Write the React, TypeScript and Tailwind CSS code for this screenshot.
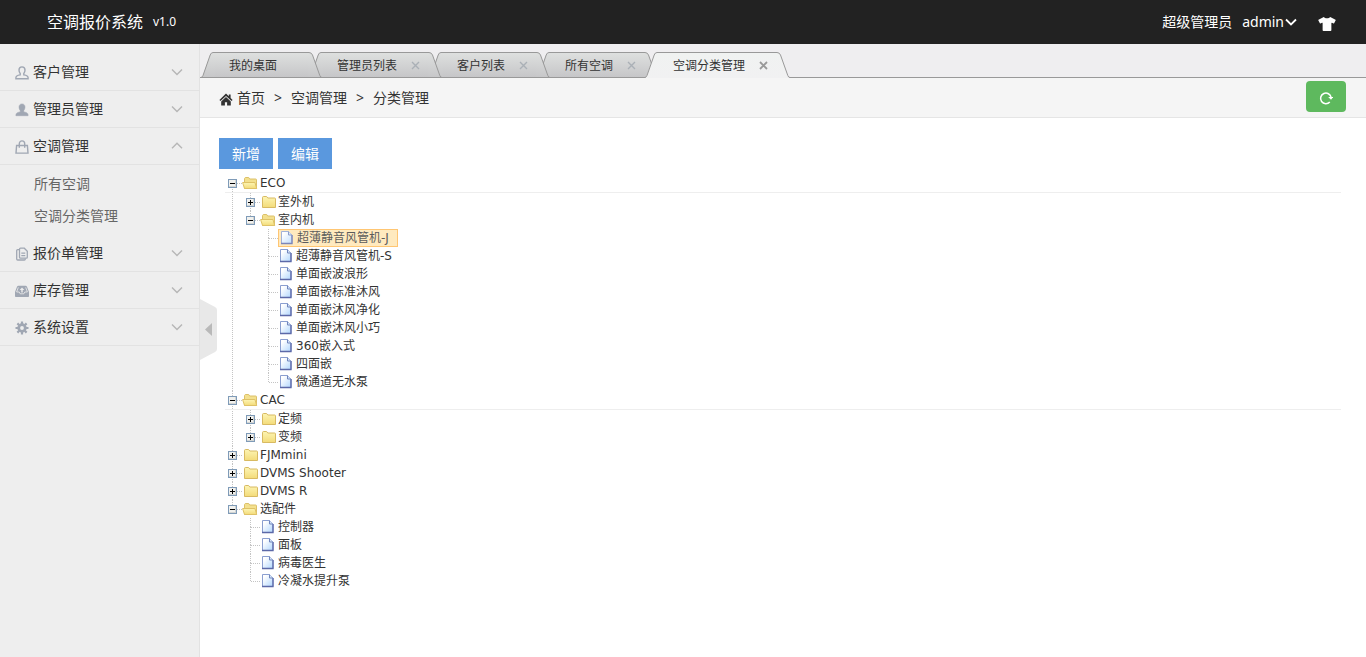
import { useState } from 'react';
import type { ReactNode } from 'react';
import clsx from 'clsx';
import { FaTshirt } from 'react-icons/fa';

type TreeItem = {
  name: string;
  open?: boolean;
  leaf?: boolean;
  children?: TreeItem[];
};

const leaf = (name: string): TreeItem => ({ name, leaf: true });

const treeData: TreeItem[] = [
  {
    name: 'ECO',
    open: true,
    children: [
      { name: '室外机' },
      {
        name: '室内机',
        open: true,
        children: [
          leaf('超薄静音风管机-J'),
          leaf('超薄静音风管机-S'),
          leaf('单面嵌波浪形'),
          leaf('单面嵌标准沐风'),
          leaf('单面嵌沐风净化'),
          leaf('单面嵌沐风小巧'),
          leaf('360嵌入式'),
          leaf('四面嵌'),
          leaf('微通道无水泵')
        ]
      }
    ]
  },
  { name: 'CAC', open: true, children: [{ name: '定频' }, { name: '变频' }] },
  { name: 'FJMmini' },
  { name: 'DVMS Shooter' },
  { name: 'DVMS R' },
  {
    name: '选配件',
    open: true,
    children: [leaf('控制器'), leaf('面板'), leaf('病毒医生'), leaf('冷凝水提升泵')]
  }
];

const tabs = ['我的桌面', '管理员列表', '客户列表', '所有空调', '空调分类管理'];

/* ---------- icons ---------- */

const userPath =
  'M7 .9c2 0 3 1.300 3 3.200 0 1.500-.5 2.600-1.200 3.300v1.500c2 .3 4.300 1 4.300 2.900v.9H.9v-.9c0-1.900 2.300-2.600 4.300-2.900V7.400C4.500 6.700 4 5.600 4 4.100 4 2.200 5 .9 7 .9z';

const UserOutlineIcon = () => (
  <svg viewBox="0 0 14 14" className="w-3.5 h-3.5" fill="none" stroke="currentColor" strokeWidth="1.400">
    <path d={userPath} />
  </svg>
);

const UserSolidIcon = () => (
  <svg viewBox="0 0 14 14" className="w-3.5 h-3.5" fill="currentColor" stroke="currentColor" strokeWidth=".5">
    <path d={userPath} />
  </svg>
);

const BagIcon = () => (
  <svg viewBox="0 0 14 14" className="w-3.5 h-3.5" fill="none" stroke="currentColor" strokeWidth="1.400">
    <path d="M1.600 5.500h10.800l.6 7.600H1z" />
    <path d="M4.300 7.800V3.800C4.300 2 5.500.9 7 .9s2.700 1.100 2.700 2.900v4" />
  </svg>
);

const DocsIcon = () => (
  <svg viewBox="0 0 14 14" className="w-3.5 h-3.5" fill="none" stroke="currentColor" strokeWidth="1.300">
    <path d="M5.500 1.200h3.800l3 3v6c0 .6-.4 1-1 1H5.500c-.6 0-1-.4-1-1v-8c0-.6.4-1 1-1z" />
    <path d="M4.300 2.600H2.700c-.6 0-1 .4-1 1v8.400c0 .6.4 1 1 1h6.600c.6 0 1-.4 1-1v-.6" />
    <path d="M6.300 6.200h4M6.300 8.600h4" />
  </svg>
);

const StockIcon = () => (
  <svg viewBox="0 0 14 14" className="w-3.5 h-3.5">
    <path d="M3.500 1.800h7c.8 0 1.200.4 1.500 1l2 5.200v4.200c0 .5-.3.8-.8.8H.8c-.5 0-.8-.3-.8-.8V8l2-5.200c.3-.6.7-1 1.500-1z" fill="currentColor" />
    <path d="M3.300 3.400L1.600 8h2.600l1 1.800h3.600l1-1.800h2.600l-1.700-4.600" fill="none" stroke="#eee" strokeWidth=".8" />
    <path d="M7 3.600l2.300 2.500H7.700v2.300H6.300V6.100H4.700z" fill="#eee" />
  </svg>
);

const GearIcon = () => (
  <svg viewBox="0 0 14 14" className="w-3.5 h-3.5" stroke="currentColor" fill="none">
    <circle cx="7" cy="7" r="3.300" strokeWidth="2.800" />
    <path
      d="M7 .5V3M7 11v2.500M.5 7H3M11 7h2.500M2.400 2.400l1.800 1.800M9.800 9.800l1.800 1.800M2.400 11.600l1.800-1.800M9.800 4.200l1.800-1.800"
      strokeWidth="2.200"
    />
  </svg>
);

const HomeIcon = () => (
  <svg viewBox="0 0 14 14" className="w-3.5 h-3.5" fill="#333">
    <path d="M7 .6L.4 6.900l1.100 1.200L7 2.900l5.500 5.200 1.100-1.200-2-1.900V1.600H9.800v1.700z" />
    <path d="M7 3.900L2.200 8.400V12.500h3.700V9.300h2.200v3.200h3.700V8.400z" />
  </svg>
);

const RefreshIcon = () => (
  <svg viewBox="0 0 14 14" className="w-3.5 h-3.5" fill="none" stroke="#fff" strokeWidth="1.500">
    <path d="M10.800 11A5.300 5.300 0 1 1 12.100 6.500" />
    <path d="M9.200 6h5L12 8.800z" fill="#fff" stroke="none" />
  </svg>
);

const Chevron = ({ up = false, bold = false }: { up?: boolean; bold?: boolean }) => (
  <svg viewBox="0 0 12 8" className="w-3 h-2" fill="none" stroke="currentColor" strokeWidth={bold ? 1.8 : 1.4}>
    <path d={up ? 'M1 6.200L6 1.300l5 4.900' : 'M1 1.500L6 6.400l5-4.900'} />
  </svg>
);

/* ---------- tree ---------- */

const FolderIcon = ({ open = false }: { open?: boolean }) => (
  <svg viewBox="0 0 16 16" className="w-4 h-4 shrink-0">
    <defs>
      <linearGradient id="folder" x1="0" y1="0" x2="0" y2="1">
        <stop offset="0" stopColor="#fdf5b4" />
        <stop offset="1" stopColor="#f3db79" />
      </linearGradient>
    </defs>
    {open ? (
      <>
        <path d="M2.500 13.500v-10l.8-1h3.400l1 1.500h6c.5 0 .8.3.8.8v8.700z" fill="#f3e08e" stroke="#dcc069" />
        <path d="M.6 7.500h12.300l1.800 6H2.500z" fill="url(#folder)" stroke="#dfc267" />
      </>
    ) : (
      <path
        d="M2.500 13.500V3.700c0-.7.3-1.200.9-1.200h3.200l1.200 1.500h6.900c.5 0 .8.3.8.8v8.700z"
        fill="url(#folder)"
        stroke="#d8ba62"
      />
    )}
  </svg>
);

const FileIcon = () => (
  <svg viewBox="0 0 16 16" className="w-4 h-4 shrink-0">
    <defs>
      <linearGradient id="file" x1="0" y1="0" x2="1" y2="1">
        <stop offset="0.200" stopColor="#fff" />
        <stop offset="1" stopColor="#b0d6fd" />
      </linearGradient>
    </defs>
    <path d="M2.500 1.500h7l3.500 3.500v8.500H2.500z" fill="url(#file)" stroke="#8b9fd0" />
    <path d="M13 5v8.500H2" fill="none" stroke="#5c69a8" strokeWidth="1.300" />
    <path d="M9.500 1.500V5H13" fill="#d5e3f8" stroke="#7186bd" />
  </svg>
);

type SwitchIconProps = { item: TreeItem; first: boolean; last: boolean; open: boolean };

const SwitchIcon = ({ item, first, last, open }: SwitchIconProps) => (
  <svg viewBox="0 0 18 18" className="w-[18px] h-[18px] block" shapeRendering="crispEdges">
    <g stroke="#c4c4c4" strokeDasharray="1 1">
      {!first && <path d="M8.500 0V9" />}
      {!last && <path d="M8.500 9V18" />}
      <path d="M9 9.500H18" />
    </g>
    {!item.leaf && (
      <>
        <rect x="4.500" y="5.500" width="8" height="8" fill="#f1f1ee" stroke="#7f9bb8" />
        <path d="M5 12.500h7M11.500 6v7" stroke="#d3d5d3" />
        <path d="M6 9.500h5" stroke="#000" />
        {!open && <path d="M8.500 7v5" stroke="#000" />}
      </>
    )}
  </svg>
);

type NodeProps = {
  item: TreeItem;
  level: number;
  first: boolean;
  last: boolean;
  selected: string;
  onSelect: (name: string) => void;
};

function TreeNode({ item, level, first, last, selected, onSelect }: NodeProps) {
  const [open, setOpen] = useState(!!item.open);
  const isSelected = selected === item.name;
  const underlined = level === 0 && open && !last;

  return (
    <li>
      <div className="flex h-[18px]">
        {item.leaf ? (
          <span className="w-[18px]">
            <SwitchIcon item={item} first={first} last={last} open={open} />
          </span>
        ) : (
          <button aria-label={`展开 ${item.name}`} aria-expanded={open} onClick={() => setOpen(!open)}>
            <SwitchIcon item={item} first={first} last={last} open={open} />
          </button>
        )}
        <a
          href="#"
          onClick={() => onSelect(item.name)}
          className={clsx(
            'flex items-center gap-0.5 h-[18px] text-xs leading-4 whitespace-nowrap',
            isSelected && 'bg-[#ffe6b0] border border-[#ffb951] pr-2 opacity-80'
          )}
        >
          {item.leaf ? <FileIcon /> : <FolderIcon open={open} />}
          <span>{item.name}</span>
        </a>
      </div>
      {item.children && open && (
        <ul
          className={clsx(
            underlined && 'relative before:absolute before:-left-2 before:right-0 before:top-0 before:h-px before:bg-[#eee] pt-px',
            last ? 'ml-[18px]' : 'ml-2 pl-[9px] border-l border-dotted border-[#c4c4c4]'
          )}
        >
          {item.children.map((child, i) => (
            <TreeNode
              key={child.name}
              item={child}
              level={level + 1}
              first={false}
              last={i === item.children!.length - 1}
              selected={selected}
              onSelect={onSelect}
            />
          ))}
        </ul>
      )}
    </li>
  );
}

/* ---------- sidebar ---------- */

type MenuProps = { icon: ReactNode; title: string; items?: string[] };

function MenuGroup({ icon, title, items }: MenuProps) {
  const [open, setOpen] = useState(!!items);
  return (
    <div>
      <button
        onClick={() => setOpen(!open)}
        aria-expanded={open}
        className="w-full h-[37px] flex items-center pl-[15px] pr-4 border-b border-[#e2e2e2] text-sm text-left"
      >
        <span className="text-[#a0a7b3] mr-1 pt-0.5">{icon}</span>
        <span className="flex-1">{title}</span>
        <span className="text-[#b6b6b6]">
          <Chevron up={open} />
        </span>
      </button>
      {items && open && (
        <ul className="py-[3px]">
          {items.map((item) => (
            <li key={item}>
              <a href="#" className="block pl-[34px] leading-8 text-sm text-[#666]">
                {item}
              </a>
            </li>
          ))}
        </ul>
      )}
    </div>
  );
}

/* ---------- tabs ---------- */

type TabProps = { title: string; active: boolean; closable: boolean; order: number; onClick: () => void };

function Tab({ title, active, closable, order, onClick }: TabProps) {
  const fill = active ? 'url(#tab-on)' : 'url(#tab-off)';
  return (
    <li className="relative flex h-[26px] -mr-[13px]" style={{ zIndex: active ? 20 : order }}>
      <svg viewBox="0 0 14 26" className="w-3.5 h-[26px]">
        <defs>
          <linearGradient id="tab-off" x1="0" y1="0" x2="0" y2="1">
            <stop offset="0" stopColor="#dee0df" />
            <stop offset="1" stopColor="#c6c6c8" />
          </linearGradient>
          <linearGradient id="tab-on" x1="0" y1="0" x2="0" y2="1">
            <stop offset="0" stopColor="#f0f2f1" />
            <stop offset="1" stopColor="#f1f1f2" />
          </linearGradient>
        </defs>
        <path d="M0 26L1.500 24.500 9 3Q10 .5 12 .5H14V26z" fill={fill} />
        <path d="M0 25.500Q1.500 25 2 23.500L9.200 3Q10 .5 12 .5H14" fill="none" stroke="#999" />
        {!active && <path d="M0 25.500H14" stroke="#999" />}
      </svg>
      <div
        className={clsx(
          'flex pl-3.5 border-t border-[#999]',
          active
            ? 'bg-linear-to-b from-[#f0f2f1] to-[#f1f1f2]'
            : 'bg-linear-to-b from-[#dee0df] to-[#c6c6c8] border-b'
        )}
      >
        <a href="#" onClick={onClick} className="pt-px text-xs leading-6 whitespace-nowrap">
          {title}
        </a>
        <div className="w-[31px] flex items-center pl-3.5">
          {closable && (
            <button aria-label={`关闭 ${title}`} className={active ? 'text-[#999]' : 'text-[#aab0b6]'}>
              <svg viewBox="0 0 9 9" className="w-[9px] h-[9px]" stroke="currentColor" strokeWidth={active ? 1.8 : 1.4}>
                <path d="M1 1l7 7M8 1L1 8" />
              </svg>
            </button>
          )}
        </div>
      </div>
      <svg viewBox="0 0 14 26" className="w-3.5 h-[26px]">
        <path d="M0 26V.5H1Q3.500.5 4.500 3L12 24.500 14 26z" fill={fill} />
        <path d="M0 .5H1Q3.500.5 4.500 3L11.800 23.500Q12.500 25.500 14 25.500" fill="none" stroke="#999" />
        {!active && <path d="M0 25.500H14" stroke="#999" />}
      </svg>
    </li>
  );
}

export default function App() {
  const [activeTab, setActiveTab] = useState(4);
  const [selected, setSelected] = useState('超薄静音风管机-J');
  const [sidebar, setSidebar] = useState(true);

  return (
    <div className="min-h-screen flex flex-col bg-white text-[#333] font-['Noto_Sans','Noto_Sans_CJK_SC',sans-serif]">
      <header className="h-11 bg-[#222] text-white flex items-center justify-between pl-[47px] pr-[30px]">
        <div className="flex items-center gap-2.5">
          <a href="#" className="text-base">空调报价系统</a>
          <span className="text-xs">v1.0</span>
        </div>
        <div className="flex items-center text-sm">
          <span className="mr-2.5">超级管理员</span>
          <button className="flex items-center gap-px">
            admin
            <Chevron bold />
          </button>
          <button aria-label="换肤" className="ml-[21px] pt-1">
            <FaTshirt className="w-[18px] h-3.5" />
          </button>
        </div>
      </header>

      <div className="flex flex-1">
        {sidebar && (
          <aside className="w-[200px] shrink-0 pt-2.5 bg-[#eee] border-r border-[#e2e2e2]">
            <MenuGroup icon={<UserOutlineIcon />} title="客户管理" />
            <MenuGroup icon={<UserSolidIcon />} title="管理员管理" />
            <MenuGroup icon={<BagIcon />} title="空调管理" items={['所有空调', '空调分类管理']} />
            <MenuGroup icon={<DocsIcon />} title="报价单管理" />
            <MenuGroup icon={<StockIcon />} title="库存管理" />
            <MenuGroup icon={<GearIcon />} title="系统设置" />
          </aside>
        )}

        <main className="relative flex-1 min-w-0">
          <div className="relative h-[34px] pt-2 pl-px bg-[#efeef0] shadow-[inset_0_-1px_#999]">
            <ul className="flex">
              {tabs.map((title, i) => (
                <Tab
                  key={title}
                  title={title}
                  active={i === activeTab}
                  closable={i > 0}
                  order={tabs.length - i}
                  onClick={() => setActiveTab(i)}
                />
              ))}
            </ul>
          </div>

          <nav className="h-10 flex items-center pl-[19px] pr-5 bg-[#f5f5f5] border-b border-[#e5e5e5] text-sm">
            <span className="pt-1 mr-1">
              <HomeIcon />
            </span>
            <a href="#">首页</a>
            <span className="w-[26px] text-center">&gt;</span>
            <span>空调管理</span>
            <span className="w-[26px] text-center">&gt;</span>
            <span>分类管理</span>
            <button
              aria-label="刷新"
              className="ml-auto mb-0.5 w-10 h-[31px] flex items-center justify-center rounded bg-[#5eb95e] pt-0.5"
            >
              <RefreshIcon />
            </button>
          </nav>

          {/* collapse handle on the sidebar edge */}
          <button
            aria-label="收起菜单"
            onClick={() => setSidebar(!sidebar)}
            className="absolute left-0 top-[255px] w-[17px] h-[61px]"
          >
            <svg viewBox="0 0 17 61" className="w-[17px] h-[61px]">
              <path d="M0 0l15 8q2 1 2 3v39q0 2-2 3L0 61z" fill="#e8e8e8" />
              <path d="M12 24v13l-7-6.500z" fill="#b9b9b9" />
            </svg>
          </button>

          <section className="p-5 pl-[19px]">
            <div className="flex gap-[5px]">
              <button className="w-[54px] h-[31px] bg-[#5a98de] text-white text-sm">新增</button>
              <button className="w-[54px] h-[31px] bg-[#5a98de] text-white text-sm">编辑</button>
            </div>
            <ul className="p-[5px] font-['DejaVu_Sans','Noto_Sans_CJK_SC',sans-serif]">
              {treeData.map((item, i) => (
                <TreeNode
                  key={item.name}
                  item={item}
                  level={0}
                  first={i === 0}
                  last={i === treeData.length - 1}
                  selected={selected}
                  onSelect={setSelected}
                />
              ))}
            </ul>
          </section>
        </main>
      </div>
    </div>
  );
}
